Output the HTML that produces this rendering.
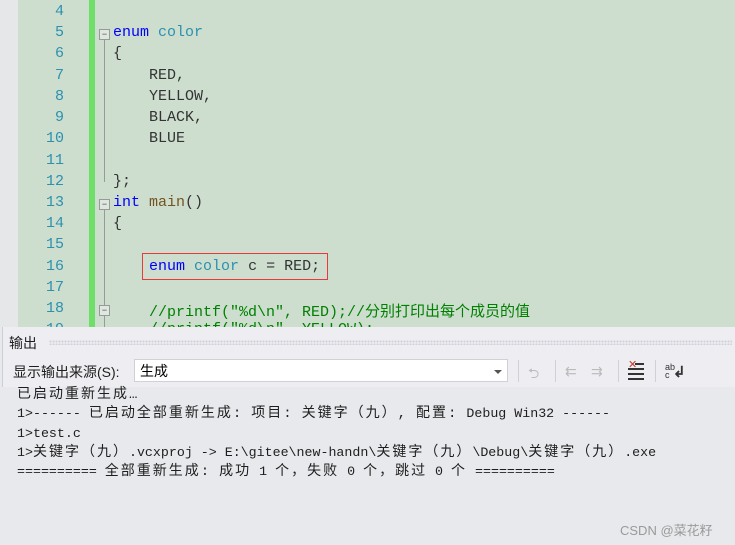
<!DOCTYPE html>
<html><head><meta charset="utf-8"><style>
body{margin:0;width:735px;height:545px;overflow:hidden;position:relative;background:#e8e9ec;font-family:"Liberation Sans","Noto Sans CJK SC",sans-serif}
.ed{position:absolute;left:0;top:0;width:735px;height:327px;background:#cddecf;overflow:hidden}
.gut{position:absolute;left:0;top:0;width:18px;height:327px;background:#e6e7e9}
.bar{position:absolute;left:89px;top:0;width:6px;height:327px;background:#6ee06a}
.ln{position:absolute;left:18px;width:46px;text-align:right;color:#2b91af;font:15px "Liberation Mono",monospace}
.cd{position:absolute;left:113px;font:15px "Liberation Mono","Noto Sans CJK SC",monospace;color:#333;white-space:pre}
.k{color:#0000ff}.t{color:#2b91af}.c{color:#008000}.f{color:#74531f}
.fold{position:absolute;left:99px;width:9px;height:9px;border:1px solid #999;background:#dfe8e0;font-size:9px;line-height:8px;text-align:center;color:#444}
.vl{position:absolute;left:104px;width:1px;background:#999}
.panel{position:absolute;left:2px;top:327px;width:733px;height:218px;background:#eeeef2;border-left:1px solid #ccced6}
.title{position:absolute;left:6px;top:6px;font-size:14px;color:#1e1e1e}
.dots{position:absolute;left:46px;top:13px;right:4px;height:5px;background-image:radial-gradient(#d0d1d8 1px,transparent 1.2px);background-size:3px 3px}
.lab{position:absolute;left:10px;top:35px;font-size:14px;color:#1e1e1e}
.combo{position:absolute;left:131px;top:32px;width:374px;height:23px;background:#fff;border:1px solid #cfd1d8;font-size:14px;line-height:22px;padding-left:5px;box-sizing:border-box}
.arr{position:absolute;right:5px;top:10px;border-left:4px solid transparent;border-right:4px solid transparent;border-top:4px solid #555}
.sep{position:absolute;top:33px;width:1px;height:22px;background:#cfd1d8}
.out{position:absolute;left:2px;top:387px;width:733px;height:158px;background:#e8e9ec}
.o{position:absolute;left:17px;font:13.3px "Liberation Mono","Noto Sans CJK SC",monospace;line-height:18px;height:18px;color:#1e1e1e;white-space:pre}
.z{font-size:14px;letter-spacing:2px;line-height:18px}
</style></head><body>
<div class="ed">
<div class="gut"></div><div class="bar"></div>
<div class="ln" style="top:3px">4</div>
<div class="ln" style="top:24px">5</div>
<div class="ln" style="top:45px">6</div>
<div class="ln" style="top:67px">7</div>
<div class="ln" style="top:88px">8</div>
<div class="ln" style="top:109px">9</div>
<div class="ln" style="top:130px">10</div>
<div class="ln" style="top:152px">11</div>
<div class="ln" style="top:173px">12</div>
<div class="ln" style="top:194px">13</div>
<div class="ln" style="top:215px">14</div>
<div class="ln" style="top:236px">15</div>
<div class="ln" style="top:258px">16</div>
<div class="ln" style="top:279px">17</div>
<div class="ln" style="top:300px">18</div>
<div class="ln" style="top:321px">19</div>
<div class="fold" style="top:29px">−</div><div class="vl" style="top:40px;height:142px"></div>
<div class="fold" style="top:199px">−</div><div class="vl" style="top:210px;height:117px"></div>
<div class="fold" style="top:305px">−</div>
<div class="cd" style="top:24px"><span class="k">enum</span> <span class="t">color</span></div>
<div class="cd" style="top:45px">{</div>
<div class="cd" style="top:67px">    RED,</div>
<div class="cd" style="top:88px">    YELLOW,</div>
<div class="cd" style="top:109px">    BLACK,</div>
<div class="cd" style="top:130px">    BLUE</div>
<div class="cd" style="top:173px">};</div>
<div class="cd" style="top:194px"><span class="k">int</span> <span class="f">main</span>()</div>
<div class="cd" style="top:215px">{</div>
<div class="cd" style="top:258px">    <span class="k">enum</span> <span class="t">color</span> c = RED;</div>
<div style="position:absolute;left:142px;top:253px;width:184px;height:25px;border:1px solid #e83a3a"></div>
<div class="cd c" style="top:300px">    //printf("%d\n", RED);//分别打印出每个成员的值</div>
<div class="cd c" style="top:321px">    //printf("%d\n", YELLOW);</div>
</div>
<div class="panel">
<div class="title">输出</div><div class="dots"></div>
<div class="lab">显示输出来源(S):</div>
<div class="combo">生成<div class="arr"></div></div>
<div class="sep" style="left:515px"></div>
<div style="position:absolute;left:525px;top:36px;color:#bbb;font-size:14px">⮌</div>
<div class="sep" style="left:552px"></div>
<div style="position:absolute;left:562px;top:36px;color:#bbb;font-size:14px">⇇</div>
<div style="position:absolute;left:588px;top:36px;color:#bbb;font-size:14px">⇉</div>
<div class="sep" style="left:615px"></div>
<div style="position:absolute;left:625px;top:34px;width:16px">
<div style="color:#c0392b;font-size:11px;line-height:8px;position:absolute;top:0">✕</div>
<div style="position:absolute;left:7px;top:2px;width:9px;height:2px;background:#333"></div>
<div style="position:absolute;left:0;top:7px;width:16px;height:2px;background:#333"></div>
<div style="position:absolute;left:0;top:12px;width:16px;height:2px;background:#333"></div>
<div style="position:absolute;left:0;top:17px;width:16px;height:2px;background:#333"></div></div>
<div class="sep" style="left:652px"></div>
<div style="position:absolute;left:662px;top:36px;font-size:9px;line-height:8px;color:#333">ab<br>c</div>
<div style="position:absolute;left:670px;top:36px;font-size:15px;color:#333;font-weight:bold">↲</div>
</div>
<div class="out"></div>
<div class="o" style="top:386px"><span class="z">已启动重新生成…</span></div>
<div class="o" style="top:405px">1&gt;------ <span class="z">已启动全部重新生成:</span> <span class="z">项目:</span> <span class="z">关键字（九）,</span> <span class="z">配置:</span> Debug Win32 ------</div>
<div class="o" style="top:425px">1&gt;test.c</div>
<div class="o" style="top:444px">1&gt;<span class="z">关键字（九）</span>.vcxproj -&gt; E:\gitee\new-handn\<span class="z">关键字（九）</span>\Debug\<span class="z">关键字（九）</span>.exe</div>
<div class="o" style="top:463px">========== <span class="z">全部重新生成:</span> <span class="z">成功</span> 1 <span class="z">个，失败</span> 0 <span class="z">个，跳过</span> 0 <span class="z">个</span> ==========</div>
<div style="position:absolute;left:620px;top:520px;font-size:13px;color:#9a9a9a">CSDN @菜花籽</div>
</body></html>
